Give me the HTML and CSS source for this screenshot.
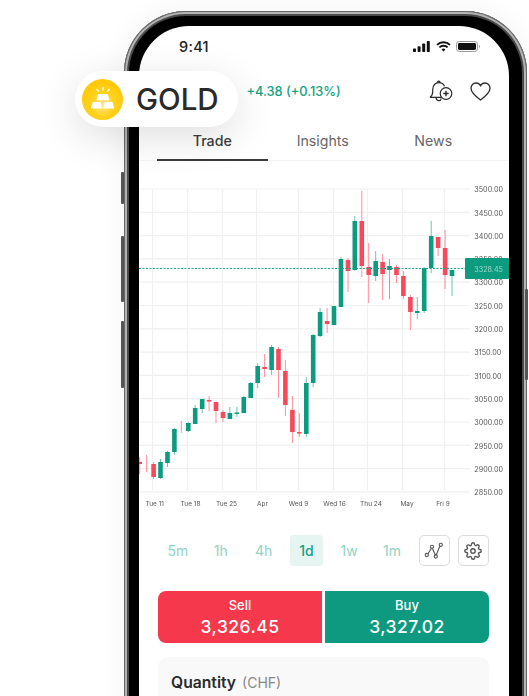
FILE: index.html
```html
<!DOCTYPE html>
<html lang="en">
<head>
<meta charset="utf-8">
<title>Gold trading</title>
<link rel="stylesheet" href="styles.css">
</head>
<body>
<div class="stage">
  <div class="phone">
    <span class="side side-a"></span>
    <span class="side side-b"></span>
    <span class="side side-c"></span>
    <span class="side side-d"></span>
    <main class="screen">
      <div class="status">
        <span class="time">9:41</span>
        <div class="status-icons">
          <svg class="ic-signal" width="18" height="11" viewBox="0 0 18 11"><g fill="#111"><rect x="0" y="7.5" width="3" height="3.5" rx=".7"/><rect x="4.6" y="5.2" width="3" height="5.8" rx=".7"/><rect x="9.2" y="2.6" width="3" height="8.4" rx=".7"/><rect x="13.8" y="0" width="3" height="11" rx=".7"/></g></svg>
          <svg class="ic-wifi" width="15" height="11" viewBox="0 0 15 11"><g fill="none" stroke="#111" stroke-width="1.9"><path d="M1 3.9a9.3 9.3 0 0 1 13 0"/><path d="M3.4 6.4a5.8 5.8 0 0 1 8.2 0"/></g><path d="M5.6 8.4a2.8 2.8 0 0 1 3.8 0L7.5 10.6z" fill="#111"/></svg>
          <svg class="ic-batt" width="24" height="11" viewBox="0 0 24 11"><rect x=".5" y=".5" width="21" height="10" rx="2.8" fill="none" stroke="#999"/><rect x="2" y="2" width="18" height="7" rx="1.4" fill="#111"/><path d="M23 3.8c.7.3 1 1 1 1.7s-.3 1.4-1 1.7z" fill="#aaa"/></svg>
        </div>
      </div>
      <div class="head">
        <span class="change">+4.38 (+0.13%)</span>
        <div class="head-icons">
          <svg width="24" height="23" viewBox="0 0 24 23" fill="none" stroke="#2b2b2b" stroke-width="1.2"><path d="M1 17.3c1.7-1.2 2.7-3 2.7-5.6V9.5C3.700 5.300 6.400 2.600 9.700 2.600s5 1.700 5.800 3.700"/><path d="M8.400 2.600c0-1.900 2.700-1.900 2.700 0"/><path d="M1 17.300h11.500"/><path d="M7 17.500c.2 4 4.800 4 5.200 1"/><circle cx="17" cy="13.500" r="5.800"/><path d="M17 10.800v5.400M14.300 13.500h5.400" stroke-width="1.400"/></svg>
          <svg width="21" height="19" viewBox="0 0 21 19" fill="none" stroke="#2b2b2b" stroke-width="1.300"><path d="M10.500 18C5 14 1 10.700 1 6.300 1 3.300 3.300 1 6 1c1.900 0 3.500 1 4.500 2.700C11.500 2 13.100 1 15 1c2.700 0 5 2.300 5 5.300 0 4.400-4 7.700-9.500 11.700z"/></svg>
        </div>
      </div>
      <nav class="tabs">
        <span class="tab tab-on">Trade</span>
        <span class="tab">Insights</span>
        <span class="tab">News</span>
      </nav>
      <svg class="chart" width="370" height="350" viewBox="139 161 370 350">
        <path class="grid" d="M139 189H470M139 212.300H470M139 235.600H470M139 258.900H470M139 282.200H470M139 305.500H470M139 328.800H470M139 352.100H470M139 375.400H470M139 398.700H470M139 422H470M139 445.300H470M139 468.600H470M139 491.900H470M152.500 189V490M187.500 189V490M222.500 189V490M256.500 189V490M298.500 189V490M333.500 189V490M367.500 189V490M402.500 189V490M444.500 189V490"/>
        <path class="wick-g" d="M160.500 459V479M167.500 451V467M174.400 428V455M188.300 422V432M195.200 405V424M202.200 399V413M229.900 407V419M236.900 407V417M243.800 396V413M250.700 382V398M257.700 363V388M271.600 345V375M306.300 377V437M313.200 334V387M320.100 308V337M334 306V325M341 257V307M354.800 216V271M375.700 251V281M389.500 259V299M417.300 297V319M424.200 267V313M431.200 221V273M452 270V296"/>
        <path class="wick-r" d="M139.700 457V474M146.600 455V472M153.600 462V479M181.300 421V433M209.100 396V411M216 402V423M223 410V422M264.600 354V377M278.500 347V398M285.400 360V416M292.400 396V443M299.300 413V437M327.100 308V333M348 258V292M361.800 191V277M368.700 243V303M382.600 254V300M396.500 265V283M403.400 271V299M410.400 295V330M438.100 237V256M445.100 230V289"/>
        <path class="body-g" d="M160.500 462V478M167.500 452V463M174.400 429V452M188.300 423V431M195.200 408V424M202.200 399V409M229.900 413V419M236.900 412.500V414M243.800 397V413M250.700 383V398M257.700 366V383M271.600 347V370M306.300 383V434M313.200 335V383M320.100 312V336M334 306V325M341 259V307M354.800 221V270M375.700 261V276M389.500 266V270M417.300 311V313M424.200 268V311M431.200 236V268M452 270V276"/>
        <path class="body-r" d="M139.700 462V464M153.600 464V477M209.100 400V401.500M216 402V411M223 412V418M264.600 367V369M278.500 349V370M285.400 371V405M292.400 410V432M299.300 432V433.500M327.100 321V324M348 260V271M361.800 221V266M368.700 267V275M382.600 262V274M396.500 267V275M403.400 276V296M410.400 297V312M438.100 237V248M445.100 248V275"/>
        <path class="price-line" d="M139 268.500H465"/>
        <g class="y-labels">
          <text x="474.300" y="192.200">3500.00</text>
          <text x="474.300" y="215.500">3450.00</text>
          <text x="474.300" y="238.800">3400.00</text>
          <text x="474.300" y="262.100">3350.00</text>
          <text x="474.300" y="285.400">3300.00</text>
          <text x="474.300" y="308.700">3250.00</text>
          <text x="474.300" y="332">3200.00</text>
          <text x="474.300" y="355.300">3150.00</text>
          <text x="474.300" y="378.600">3100.00</text>
          <text x="474.300" y="401.900">3050.00</text>
          <text x="474.300" y="425.200">3000.00</text>
          <text x="474.300" y="448.500">2950.00</text>
          <text x="474.300" y="471.800">2900.00</text>
          <text x="474.300" y="495.100">2850.00</text>
        </g>
        <rect class="price-tag" x="465" y="258" width="44" height="21" rx="1"/>
        <text class="price-text" x="474.300" y="271.500">3328.45</text>
        <g class="x-labels">
          <text x="154.700" y="506">Tue 11</text>
          <text x="190.500" y="506">Tue 18</text>
          <text x="226.500" y="506">Tue 25</text>
          <text x="262.500" y="506">Apr</text>
          <text x="298.500" y="506">Wed 9</text>
          <text x="334.500" y="506">Wed 16</text>
          <text x="371" y="506">Thu 24</text>
          <text x="407" y="506">May</text>
          <text x="443" y="506">Fri 9</text>
        </g>
      </svg>
      <div class="frames">
        <div class="frame-list">
          <span class="frame">5m</span>
          <span class="frame">1h</span>
          <span class="frame">4h</span>
          <span class="frame frame-on">1d</span>
          <span class="frame">1w</span>
          <span class="frame">1m</span>
        </div>
        <div class="tools">
          <span class="tool"><svg width="20" height="18" viewBox="0 0 20 18" fill="none" stroke="#555" stroke-width="1.100"><path d="M3.500 12.500L8 5.500l3.800 8.500 4.500-11"/><g fill="#fff"><circle cx="2.800" cy="13" r="1.600"/><circle cx="8" cy="4.800" r="1.600"/><circle cx="11.800" cy="14.500" r="1.600"/><circle cx="16.800" cy="2.800" r="1.600"/></g></svg></span>
          <span class="tool"><svg width="18" height="18" viewBox="0 0 24 24" fill="none" stroke="#555" stroke-width="1.800" stroke-linejoin="round"><circle cx="12" cy="12" r="3"/><path d="M19.400 15a1.650 1.650 0 0 0 .33 1.820l.06.06a2 2 0 1 1-2.830 2.830l-.06-.06a1.650 1.650 0 0 0-2.820 1.170V21a2 2 0 0 1-4 0v-.09A1.650 1.650 0 0 0 7.260 19.700l-.06.06a2 2 0 1 1-2.830-2.830l.06-.06a1.650 1.650 0 0 0-1.170-2.820H3a2 2 0 0 1 0-4h.09A1.650 1.650 0 0 0 4.300 7.260l-.06-.06a2 2 0 1 1 2.830-2.830l.06.06a1.650 1.650 0 0 0 1.820.33H9a1.650 1.650 0 0 0 1-1.510V3a2 2 0 0 1 4 0v.09a1.650 1.650 0 0 0 2.800 1.170l.06-.06a2 2 0 1 1 2.830 2.830l-.06.06a1.650 1.650 0 0 0-.33 1.820V9a1.650 1.650 0 0 0 1.510 1H21a2 2 0 0 1 0 4h-.09a1.650 1.650 0 0 0-1.510 1z"/></svg></span>
        </div>
      </div>
      <div class="trade">
        <button class="trade-btn sell"><span class="trade-label">Sell</span><span class="trade-price">3,326.45</span></button>
        <button class="trade-btn buy"><span class="trade-label">Buy</span><span class="trade-price">3,327.02</span></button>
      </div>
      <section class="qty">
        <strong class="qty-title">Quantity</strong>
        <span class="qty-unit">(CHF)</span>
      </section>
    </main>
  </div>
  <div class="pill">
    <svg class="coin" width="41" height="41" viewBox="0 0 41 41">
      <defs><radialGradient id="coinFill" cx="50%" cy="62%" r="52%"><stop offset="0" stop-color="#ffe88a"/><stop offset=".55" stop-color="#ffd21f"/><stop offset="1" stop-color="#ffc90a"/></radialGradient></defs>
      <circle cx="20.500" cy="20.500" r="20.500" fill="url(#coinFill)"/>
      <g fill="#fff"><path d="M16.200 15h9.600l1.700 6.200h-13zM10.800 23h7.800l1.600 6.500H8.700zM22.600 23h7.800l2 6.500H21z"/></g>
      <path d="M21 11.500V7.800M25.200 12.500l2.300-2.500M16.800 12.500l-2.300-2.500" stroke="#fff" stroke-width="1.300" fill="none"/>
    </svg>
    <span class="pill-text">GOLD</span>
  </div>
</div>
</body>
</html>
```

FILE: styles.css
```css
* { box-sizing: border-box; }
html, body { margin: 0; padding: 0; background: #fff; }
body { font-family: Inter, "Noto Sans", sans-serif; color: #2a2a2a; }

.stage { position: relative; width: 529px; height: 696px; overflow: hidden; padding: 11px 0 0 124px; }

.phone {
  position: relative;
  width: 403px;
  height: 800px;
  padding: 15px 18px 0 15px;
  background: #000;
  border-radius: 62px;
  box-shadow: inset 0 0 0 1px #666, inset 0 0 0 3px #b4b4b4, inset 0 0 0 5px #4a4a4a, 0 0 30px rgba(0,0,0,.05);
}
.side { position: absolute; width: 3px; background: #555; border-radius: 1px; }
.side-a { left: -3px; top: 161px; height: 32px; }
.side-b { left: -3px; top: 225px; height: 66px; }
.side-c { left: -3px; top: 310px; height: 67px; }
.side-d { right: -1px; top: 278px; height: 91px; }

.screen { width: 370px; height: 785px; background: #fff; border-radius: 50px 50px 0 0; overflow: hidden; }

.status { display: flex; justify-content: space-between; align-items: center; height: 40px; padding: 0 29px 0 40px; }
.time { font-size: 14.5px; font-weight: 500; color: #222; letter-spacing: .3px; }
.status-icons { display: flex; align-items: center; gap: 5px; }

.head { display: flex; justify-content: space-between; align-items: center; height: 50px; padding: 0 18px 0 107.500px; }
.change { font-size: 12.800px; font-weight: 500; color: #13a382; }
.head-icons { display: flex; align-items: center; gap: 17px; }

.tabs { display: flex; height: 45px; padding: 0 20px 0 18px; border-bottom: 1px solid #f3f3f3; }
.tab { width: 110.500px; height: 45px; line-height: 50px; text-align: center; font-size: 14.200px; font-weight: 400; color: #666; }
.tab-on { font-weight: 500; color: #3c3c3c; border-bottom: 2px solid #3a3a3a; }

.chart { display: block; filter: blur(.25px); }
.grid { fill: none; stroke: #f0f0f0; stroke-width: 1.200; }
.wick-g { fill: none; stroke: #0d9b7f; stroke-width: 1; opacity: .6; }
.wick-r { fill: none; stroke: #f8485a; stroke-width: 1; opacity: .6; }
.body-g { fill: none; stroke: #0d9b7f; stroke-width: 4.600; }
.body-r { fill: none; stroke: #f8485a; stroke-width: 4.600; }
.price-line { fill: none; stroke: #17a88c; stroke-width: 1; stroke-dasharray: 2 1.500; }
.y-labels text { font-family: Inter, sans-serif; font-size: 7.200px; fill: #555; }
.x-labels text { font-family: Inter, sans-serif; font-size: 6.500px; fill: #555; text-anchor: middle; }
.price-tag { fill: #0d9b7f; }
.price-text { font-family: Inter, sans-serif; font-size: 7.200px; fill: #9ed8ca; }

.frames { display: flex; justify-content: space-between; align-items: center; height: 31px; margin-top: 24px; padding: 0 20px 0 22.500px; }
.frame-list { display: flex; gap: 9.800px; }
.frame { width: 33px; height: 31px; line-height: 31px; text-align: center; font-size: 14px; color: #8fd3c3; border-radius: 4px; }
.frame-on { background: #e6f5f1; color: #17a085; font-weight: 500; }
.tools { display: flex; gap: 7.500px; }
.tool { display: flex; align-items: center; justify-content: center; width: 31.500px; height: 31px; border: 1px solid #dcdcdc; border-radius: 5px; }

.trade { display: flex; gap: 3px; margin: 25px 20px 0 19px; }
.trade-btn { display: flex; flex-direction: column; align-items: center; flex: 1; height: 52px; padding: 6px 0 0; border: 0; color: #fff; font-family: inherit; }
.sell { background: #f5384b; border-radius: 8px 0 0 8px; }
.buy { background: #0d9a80; border-radius: 0 8px 8px 0; }
.trade-label { font-size: 13px; font-weight: 500; line-height: 16px; }
.trade-price { font-size: 17.500px; font-weight: 500; line-height: 22px; margin-top: 3px; letter-spacing: .45px; }

.qty { display: flex; align-items: baseline; gap: 6px; height: 120px; margin: 14px 20px 0 19px; padding: 16px 13px; background: #f9f9f9; border-radius: 10px 10px 0 0; }
.qty-title { font-size: 15.700px; font-weight: 600; color: #2a2a2a; }
.qty-unit { font-size: 14px; color: #888; }

.pill { position: absolute; left: 75px; top: 71px; display: flex; align-items: center; gap: 13px; width: 163px; height: 56px; padding-left: 7px; background: #fff; border-radius: 28px; box-shadow: 0 10px 40px rgba(0,0,0,.13); }
.coin { display: block; flex: none; }
.pill-text { font-size: 29.500px; font-weight: 500; color: #2a2a2a; }
```
